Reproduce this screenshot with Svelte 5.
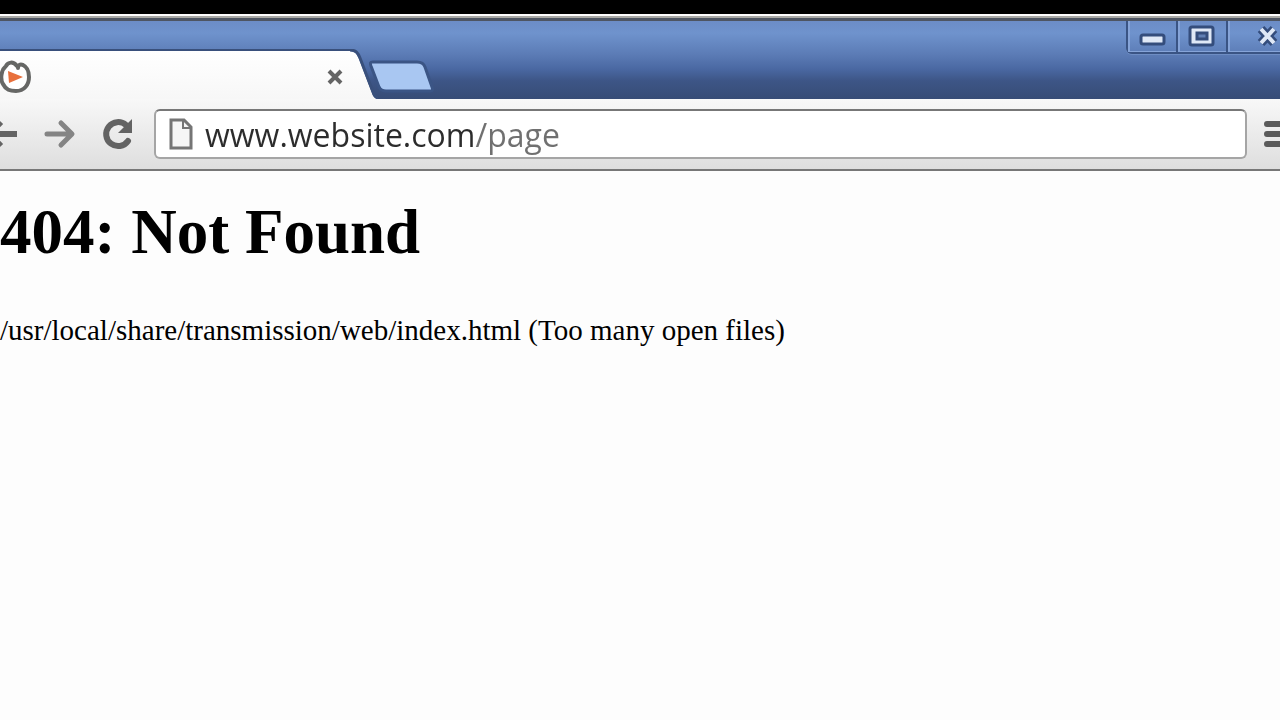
<script lang="ts">
    let url = $state('www.website.com/page');
</script>

<div class="window">
    <header>
        <div class="tabstrip">
            <div class="tab">
                <svg class="favicon" width="32" height="34" viewBox="0 0 32 34" aria-hidden="true">
                    <path d="M17 6 C13 1 8 2 6 6 C1 10 0 19 3 24 C6 30 10 31 16 31 C24 31 29 25 29 17 C29 11 27 7 23 5 C20 4 18 5 18 8" fill="#fff" stroke="#666765" stroke-width="4" stroke-linejoin="round" stroke-linecap="round" />
                    <path d="M8 11 L23 17 L9 23 Z" fill="#e8703c" />
                </svg>
                <button class="close-tab" aria-label="Close tab">
                    <svg width="18" height="18" viewBox="0 0 18 18"><path d="M3 3 L15 15 M15 3 L3 15" stroke="#646464" stroke-width="4" /></svg>
                </button>
            </div>
            <!-- slanted right side of the tab -->
            <svg class="tab-edge" width="28" height="50" viewBox="0 0 28 50" aria-hidden="true">
                <path d="M0 2 C5 2 7 5 9 10 L22 44 C23 48 25 50 28 50 H0 Z" fill="url(#tabfill)" />
                <path d="M0 1 C6 1 8 4 10 9 L23 43 C24 47 26 48 28 49" fill="none" stroke="#39507c" stroke-width="3" />
                <defs>
                    <linearGradient id="tabfill" x1="0" y1="0" x2="0" y2="1">
                        <stop offset="0" stop-color="#ffffff" />
                        <stop offset="1" stop-color="#f7f7f7" />
                    </linearGradient>
                </defs>
            </svg>
            <button class="new-tab" aria-label="New tab">
                <svg width="68" height="36" viewBox="0 0 68 36">
                    <path d="M5 3 H49 C54 3 56 5 57 8 L64 28 C65 31 65 32 62 32 H18 C14 32 12 30 11 28 L3 7 C2 4 2 3 5 3 Z" fill="#a9c7f2" stroke="#3b5585" stroke-width="3" />
                </svg>
            </button>
            <div class="controls">
                <button aria-label="Minimize">
                    <svg width="28" height="24" viewBox="0 0 28 24"><rect x="3" y="10" width="23" height="9" rx="2" fill="#dfe8f6" stroke="#344d7c" stroke-width="3" /></svg>
                </button>
                <button aria-label="Maximize">
                    <svg width="28" height="24" viewBox="0 0 28 24">
                        <rect x="2" y="2" width="23" height="18" rx="2" fill="#dfe8f6" stroke="#344d7c" stroke-width="3" />
                        <rect x="9" y="8" width="10" height="6" fill="#607fb4" stroke="#344d7c" stroke-width="3" />
                    </svg>
                </button>
                <button class="close" aria-label="Close">
                    <svg width="28" height="24" viewBox="0 0 28 24">
                        <path d="M7 4 L20 18 M20 4 L7 18" stroke="#344d7c" stroke-width="9" />
                        <path d="M7 4 L20 18 M20 4 L7 18" stroke="#dfe8f6" stroke-width="4" />
                    </svg>
                </button>
            </div>
        </div>

        <nav class="toolbar">
            <button class="back" aria-label="Back">
                <svg width="32" height="32" viewBox="0 0 32 32"><path d="M31 16 H4 M15 4 L3 16 L15 28" fill="none" stroke="#646464" stroke-width="6" stroke-linejoin="round" /></svg>
            </button>
            <button class="forward" aria-label="Forward">
                <svg width="32" height="32" viewBox="0 0 32 32"><path d="M3 16 H26 M17 5 L28 16 L17 27" fill="none" stroke="#848484" stroke-width="5" stroke-linecap="round" stroke-linejoin="round" /></svg>
            </button>
            <button class="reload" aria-label="Reload">
                <svg width="34" height="34" viewBox="0 0 34 34">
                    <path d="M26 8 A12 12 0 1 0 28 24" fill="none" stroke="#636363" stroke-width="6" stroke-linecap="round" />
                    <path d="M32 2 V16 H18 Z" fill="#636363" />
                </svg>
            </button>
            <div class="omnibox">
                <svg width="24" height="32" viewBox="0 0 24 32" aria-hidden="true">
                    <path d="M2 2 H15 L22 9 V30 H2 Z" fill="#f6f6f6" stroke="#757575" stroke-width="3" />
                    <path d="M14 2 V10 H22" fill="none" stroke="#757575" stroke-width="2" />
                </svg>
                <input type="text" aria-label="Address" bind:value={url} spellcheck="false" />
            </div>
            <button class="menu" aria-label="Menu">
                <svg width="32" height="28" viewBox="0 0 32 28"><path d="M4 4 H28 M4 14 H28 M4 24 H28" stroke="#5a5a5a" stroke-width="6" stroke-linecap="round" /></svg>
            </button>
        </nav>
    </header>

    <main>
        <h1>404: Not Found</h1>
        <p>/usr/local/share/transmission/web/index.html (Too many open files)</p>
    </main>
</div>

<style>
    :global(body) {
        background: #fdfdfd;
    }
    .window {
        border-top: 14px solid #000;
        overflow: hidden;
    }
    button {
        display: flex;
        align-items: center;
        justify-content: center;
        flex: none;
        padding: 0;
        border: none;
        background: none;
    }
    svg {
        display: block;
        flex: none;
    }
    .tabstrip {
        display: flex;
        align-items: flex-end;
        height: 78px;
        border-top: 3px solid #4e5562;
        box-shadow: 0 -2px #a9a9a6;
        margin-top: 4px;
        background: linear-gradient(#6c8dc7 0, #6f93cd 12px, #5b7bb5 34px, #4a68a2 48px, #3d5586 60px, #374c76 78px);
    }
    .tab {
        display: flex;
        align-items: center;
        justify-content: space-between;
        flex: none;
        box-sizing: border-box;
        width: 350px;
        height: 50px;
        padding-top: 4px;
        padding-right: 6px;
        border-top: 2px solid #39507c;
        background: linear-gradient(#fff, #f7f7f7);
    }
    .new-tab {
        height: 40px;
        margin-left: -10px;
        align-items: flex-start;
    }
    .controls {
        display: flex;
        align-self: flex-start;
        margin-left: auto;
        margin-right: -30px;
        border: 2px solid #3a5484;
        border-top: none;
        border-bottom-left-radius: 6px;
        box-shadow: 0 1px #6e8dc3;
    }
    .controls button {
        box-sizing: border-box;
        width: 50px;
        height: 31px;
        border-right: 2px solid #3a5484;
        box-shadow: inset 2px -1px #86a4d8;
    }
    .controls .close {
        width: 80px;
        border-right: none;
    }
    .toolbar {
        display: flex;
        align-items: center;
        box-sizing: border-box;
        height: 72px;
        border-bottom: 2px solid #777;
        background: linear-gradient(#f8f8f8, #dedede);
    }
    .back {
        margin-left: -14px;
    }
    .forward {
        margin-left: 26px;
    }
    .reload {
        margin-left: 24px;
    }
    .omnibox {
        display: flex;
        align-items: center;
        flex: 1;
        min-width: 0;
        box-sizing: border-box;
        height: 50px;
        margin-left: 20px;
        padding-left: 13px;
        border: 2px solid #a5a5a5;
        border-top-color: #777;
        border-radius: 6px;
        background: #fff;
    }
    /* host is dark, the path after it is gray */
    input {
        flex: 1;
        min-width: 0;
        margin-left: 12px;
        padding: 2px 0 0;
        border: none;
        outline: none;
        font: 32px "Open Sans", "Noto Sans", sans-serif;
        line-height: 44px;
        color: transparent;
        background: linear-gradient(90deg, #2c2c2c 269px, #707070 269px);
        background-clip: text;
    }
    .menu {
        margin-left: 16px;
        margin-right: -15px;
    }
    main {
        color: #000;
        font-family: "Liberation Serif", "Times New Roman", serif;
    }
    h1 {
        margin: 24px 0 0;
        font-size: 63px;
        line-height: 74px;
    }
    p {
        margin: 41px 0 0;
        font-size: 29px;
        line-height: 40px;
        white-space: nowrap;
    }
</style>
